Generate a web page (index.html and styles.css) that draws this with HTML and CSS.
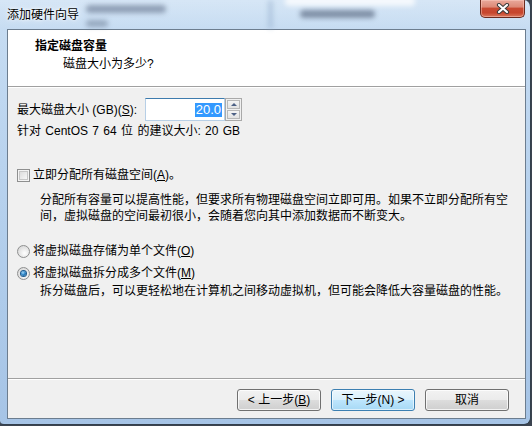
FILE: index.html
```html
<!DOCTYPE html>
<html lang="zh-CN">
<head>
<meta charset="utf-8">
<title>添加硬件向导</title>
<link rel="stylesheet" href="styles.css">
</head>
<body>
<div class="window">
  <div class="titlebar">
    <span class="glass g4"></span>
    <span class="glass g1"></span>
    <span class="glass g2"></span>
    <span class="glass g3"></span>
    <span class="glass g5"></span>
    <span class="title">添加硬件向导</span>
    <span class="spacer"></span>
    <div class="close">
      <svg width="14" height="11" viewBox="0 0 14 11">
        <path d="M3 2 L11 9 M11 2 L3 9" stroke="#3b3b3b" stroke-width="4.2" stroke-linecap="round" fill="none"/>
        <path d="M3 2 L11 9 M11 2 L3 9" stroke="#ffffff" stroke-width="2.2" stroke-linecap="round" fill="none"/>
      </svg>
    </div>
  </div>
  <div class="client">
    <div class="header">
      <div class="h-title">指定磁盘容量</div>
      <div class="h-sub">磁盘大小为多少?</div>
    </div>
    <div class="content">
      <div class="size-row">
        <span class="size-label">最大磁盘大小 (GB)(<u>S</u>):</span>
        <div class="spin">
          <div class="field"><span class="sel">20.0</span></div>
          <div class="spinner">
            <div class="sb"><span class="tri up"></span></div>
            <div class="sb"><span class="tri down"></span></div>
          </div>
        </div>
      </div>
      <div class="hint">针对 CentOS 7 64 位 的建议大小: 20 GB</div>
      <div class="opt check-row"><span class="checkbox"></span><span>立即分配所有磁盘空间(<u>A</u>)。</span></div>
      <p class="desc d1">分配所有容量可以提高性能，但要求所有物理磁盘空间立即可用。如果不立即分配所有空<br>间，虚拟磁盘的空间最初很小，会随着您向其中添加数据而不断变大。</p>
      <div class="opt radio-row r1"><span class="radio"></span><span>将虚拟磁盘存储为单个文件(<u>O</u>)</span></div>
      <div class="opt radio-row r2"><span class="radio on"></span><span>将虚拟磁盘拆分成多个文件(<u>M</u>)</span></div>
      <p class="desc d2">拆分磁盘后，可以更轻松地在计算机之间移动虚拟机，但可能会降低大容量磁盘的性能。</p>
    </div>
    <div class="footer">
      <button class="btn">&lt; 上一步(<u>B</u>)</button>
      <button class="btn default">下一步(N) &gt;</button>
      <button class="btn">取消</button>
    </div>
  </div>
</div>
</body>
</html>
```

FILE: styles.css
```css
html, body {
  margin: 0;
  padding: 0;
  background: #3c4450;
}
body {
  width: 532px;
  height: 426px;
  overflow: hidden;
  font-family: "Liberation Sans", "Noto Sans CJK SC", sans-serif;
  font-size: 12px;
  color: #000;
}
.window {
  width: 531px;
  height: 425px;
  box-sizing: border-box;
  border-right: 1px solid #34404d;
  border-bottom: 1px solid #34404d;
  border-top-right-radius: 7px;
  border-bottom-right-radius: 7px;
  border-bottom-left-radius: 4px;
  background: linear-gradient(to bottom, #c9def3 0%, #bcd5ef 30%, #aecbea 70%, #a6c4e6 100%);
  display: flex;
  flex-direction: column;
  overflow: hidden;
}
.titlebar {
  height: 29px;
  position: relative;
  display: flex;
  align-items: flex-start;
  padding-left: 7px;
  padding-right: 5px;
  background: linear-gradient(to bottom, rgba(255,255,255,0.25), rgba(255,255,255,0));
}
.glass {
  position: absolute;
  border-radius: 4px;
  filter: blur(2.5px);
}
.g1 { left: 86px; top: 5px; width: 80px; height: 8px; background: rgba(100,115,140,0.6); }
.g2 { left: 86px; top: 20px; width: 22px; height: 7px; background: rgba(100,115,140,0.5); }
.g3 { left: 300px; top: 10px; width: 75px; height: 8px; background: rgba(85,100,125,0.65); }
.g4 { left: 285px; top: -4px; width: 130px; height: 10px; background: rgba(255,255,255,0.75); }
.g5 { left: 268px; top: 0px; width: 5px; height: 29px; background: rgba(150,175,205,0.5); }
.title {
  position: relative;
  margin-top: 7px;
  line-height: 16px;
  font-size: 12px;
  color: #000;
  text-shadow: 0 0 6px #ffffff, 0 0 3px #ffffff;
}
.spacer { flex: 1; }
.close {
  width: 45px;
  height: 18px;
  box-sizing: border-box;
  border: 1px solid #6b2a1e;
  border-top: none;
  border-radius: 0 0 5px 5px;
  background: linear-gradient(to bottom, #e9a99b 0%, #dd8a78 40%, #c84a32 50%, #c7452c 75%, #d9765c 100%);
  box-shadow: inset 0 0 0 1px rgba(255,210,200,0.45);
  display: flex;
  align-items: center;
  justify-content: center;
  position: relative;
}
.close svg { display: block; }
.client {
  margin-left: 7px;
  width: 519px;
  height: 390px;
  box-sizing: border-box;
  border: 1px solid #6c7d8f;
  background: #f0f0f0;
  display: flex;
  flex-direction: column;
}
.header {
  height: 57px;
  box-sizing: border-box;
  background: #ffffff;
  border-bottom: 1px solid #a0a0a0;
  padding: 8px 0 0 27px;
}
.h-title {
  font-weight: bold;
  line-height: 16px;
}
.h-sub {
  line-height: 16px;
  margin-top: 2px;
  padding-left: 28px;
}
.content {
  flex: 1;
  border-top: 1px solid #ffffff;
  padding: 10px 0 0 9px;
  display: flex;
  flex-direction: column;
  align-items: flex-start;
}
.size-row {
  display: flex;
  align-items: center;
  height: 23px;
}
.size-label {
  width: 128px;
  line-height: 16px;
}
.spin {
  display: flex;
  height: 23px;
}
.field {
  width: 80px;
  box-sizing: border-box;
  background: #fff;
  border: 1px solid #b7cfe6;
  border-top-color: #3d7bad;
  display: flex;
  align-items: center;
  justify-content: flex-end;
  padding-right: 2px;
}
.sel {
  background: #3399ff;
  color: #fff;
  font-size: 13px;
  line-height: 14px;
  padding: 0 1px;
}
.spinner {
  width: 17px;
  box-sizing: border-box;
  border: 1px solid #a9a9a9;
  background: #f0f0f0;
  display: flex;
  flex-direction: column;
  padding: 1px;
  gap: 1px;
}
.sb {
  flex: 1;
  box-sizing: border-box;
  border: 1px solid #b8b8b8;
  background: linear-gradient(to bottom, #f4f4f4, #e2e2e2);
  display: flex;
  align-items: center;
  justify-content: center;
}
.tri {
  width: 0;
  height: 0;
  border-left: 3px solid transparent;
  border-right: 3px solid transparent;
}
.tri.up { border-bottom: 3px solid #4d6185; }
.tri.down { border-top: 3px solid #4d6185; }
.hint {
  margin-top: 2px;
  line-height: 16px;
  word-spacing: 1px;
}
.opt {
  display: flex;
  align-items: center;
  line-height: 16px;
  gap: 3px;
}
.check-row { margin-top: 28px; }
.checkbox {
  width: 13px;
  height: 13px;
  box-sizing: border-box;
  border: 1px solid #8e8f8f;
  background: linear-gradient(135deg, #d6d6d6 0%, #eeeeee 60%, #ffffff 100%);
  box-shadow: inset 0 0 0 1px #f4f4f4, inset 0 0 0 2px #c7c7c7;
}
.desc {
  margin: 0;
  padding-left: 23px;
  line-height: 16px;
}
.d1 { margin-top: 9px; }
.r1 { margin-top: 19px; }
.r2 { margin-top: 6px; }
.d2 { margin-top: 2px; }
.radio {
  width: 13px;
  height: 13px;
  box-sizing: border-box;
  border-radius: 50%;
  border: 1px solid #8e8f8f;
  background: radial-gradient(circle at 60% 65%, #ffffff 0%, #e4e4e4 55%, #cfcfcf 100%);
  display: flex;
  align-items: center;
  justify-content: center;
}
.radio.on::after {
  content: "";
  width: 5px;
  height: 5px;
  border-radius: 50%;
  background: radial-gradient(circle at 40% 35%, #a9d9f8 0%, #2c86c9 45%, #174e80 100%);
  box-shadow: 0 0 0 1px #1f5c8f;
}
.footer {
  height: 40px;
  box-sizing: border-box;
  border-top: 1px solid #a0a0a0;
  box-shadow: inset 0 1px 0 #ffffff;
  padding: 10px 16px 0 0;
  display: flex;
  justify-content: flex-end;
  align-items: flex-start;
  gap: 10px;
}
.btn {
  width: 84px;
  height: 22px;
  box-sizing: border-box;
  border: 1px solid #707070;
  border-radius: 3px;
  background: linear-gradient(to bottom, #f2f2f2 0%, #ebebeb 50%, #dddddd 50%, #cfcfcf 100%);
  box-shadow: inset 0 0 0 1px rgba(255,255,255,0.75);
  font-family: "Liberation Sans", "Noto Sans CJK SC", sans-serif;
  font-size: 12px;
  line-height: 16px;
  color: #000;
  padding: 0;
  margin: 0;
}
.btn.default {
  border-color: #3c7fb1;
  background: linear-gradient(to bottom, #eaf6fd 0%, #d9f0fc 50%, #bee6fd 50%, #a7d9f5 100%);
  box-shadow: inset 0 0 0 1px rgba(255,255,255,0.6);
}
u { text-decoration: underline; }
```
